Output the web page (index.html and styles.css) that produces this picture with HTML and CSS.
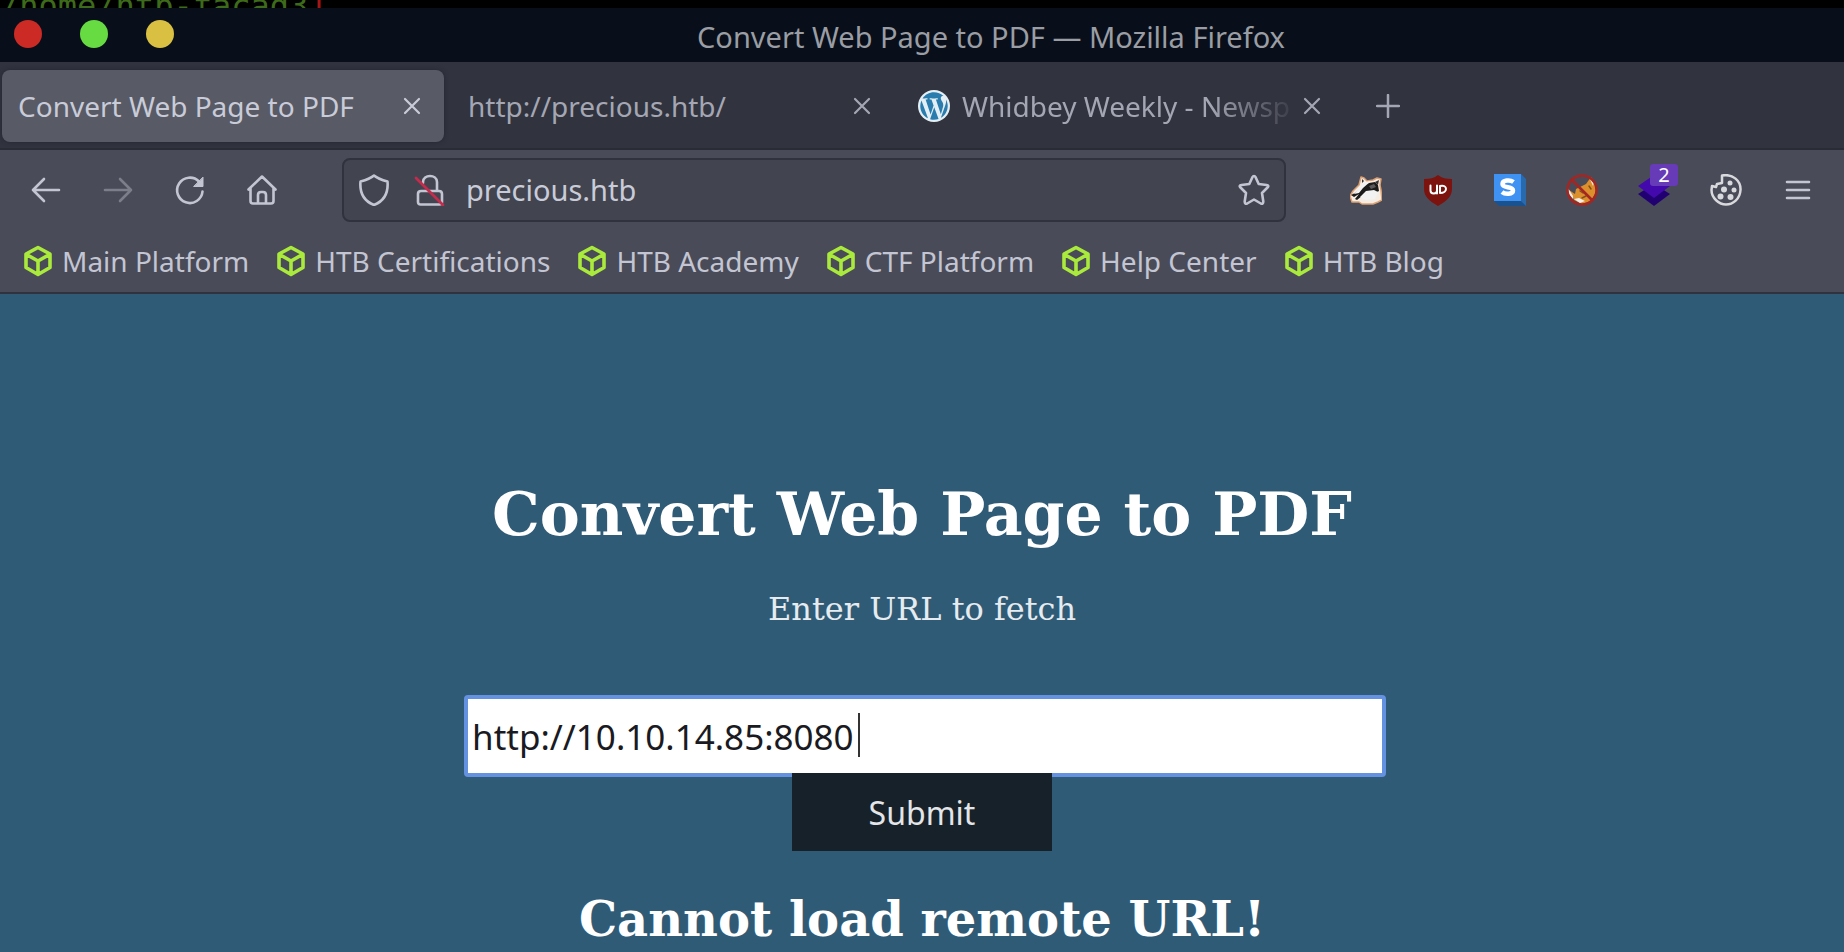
FILE: index.html
```html
<!DOCTYPE html>
<html lang="en">
<head>
<meta charset="utf-8">
<title>Convert Web Page to PDF</title>
<link rel="stylesheet" href="styles.css">
</head>
<body>
<svg class="sprite" aria-hidden="true">
  <symbol id="close" viewBox="0 0 24 24"><path d="M5 5l14 14M19 5L5 19" fill="none" stroke="currentColor" stroke-width="2.200" stroke-linecap="round"/></symbol>
  <symbol id="cube" viewBox="0 0 28 32"><path d="M14 2.500L26 9v13.500L14 29.500 2 22.500V9zM2.500 9.500L14 16l11.500-6.500M14 16v13" fill="none" stroke="#a9ea3c" stroke-width="3.600" stroke-linejoin="round"/></symbol>
</svg>
<div class="terminal"><span class="path">/home/htb-facad3</span><span class="bracket">]</span></div>
<header class="titlebar">
  <div class="lights">
    <button class="light red" aria-label="Close window"></button>
    <button class="light green" aria-label="Maximize window"></button>
    <button class="light yellow" aria-label="Minimize window"></button>
  </div>
  <div class="window-title">Convert Web Page to PDF — Mozilla Firefox</div>
</header>
<nav class="tabs" aria-label="Tabs">
  <div class="tab active"><span class="tab-label">Convert Web Page to PDF</span><button class="tab-close" aria-label="Close tab"><svg viewBox="0 0 24 24"><use href="#close"/></svg></button></div>
  <div class="tab"><span class="tab-label">http://precious.htb/</span><button class="tab-close" aria-label="Close tab"><svg viewBox="0 0 24 24"><use href="#close"/></svg></button></div>
  <div class="tab">
    <svg class="favicon" viewBox="0 0 122.520 122.523" aria-hidden="true">
      <circle cx="61.260" cy="61.260" r="61.260" fill="#e4eff5"/>
      <g fill="#2a7cae"><path d="m8.708 61.260c0 20.802 12.089 38.779 29.619 47.298l-25.069-68.686c-2.916 6.536-4.550 13.769-4.550 21.388z"/><path d="m96.740 58.608c0-6.495-2.333-10.993-4.334-14.494-2.664-4.329-5.161-7.995-5.161-12.324 0-4.831 3.664-9.328 8.825-9.328.233 0 .454.029.681.042-9.350-8.566-21.807-13.796-35.489-13.796-18.360 0-34.513 9.420-43.910 23.688 1.233.037 2.395.063 3.382.063 5.497 0 14.006-.667 14.006-.667 2.833-.167 3.167 3.994.337 4.329 0 0-2.847.335-6.015.501l19.138 56.925 11.501-34.493-8.188-22.434c-2.830-.166-5.511-.501-5.511-.501-2.832-.166-2.500-4.496.332-4.329 0 0 8.679.667 13.843.667 5.496 0 14.006-.667 14.006-.667 2.835-.167 3.168 3.994.337 4.329 0 0-2.853.335-6.015.501l18.992 56.494 5.242-17.517c2.272-7.269 4.001-12.490 4.001-16.989z"/><path d="m62.184 65.857-15.768 45.819c4.708 1.384 9.687 2.141 14.846 2.141 6.120 0 11.989-1.058 17.452-2.979-.141-.225-.269-.464-.374-.724z"/><path d="m107.376 36.046c.226 1.674.354 3.471.354 5.404 0 5.333-.996 11.328-3.996 18.824l-16.053 46.413c15.624-9.111 26.133-26.038 26.133-45.426.001-9.137-2.333-17.729-6.438-25.215z"/></g>
    </svg>
    <span class="tab-label fade">Whidbey Weekly - Newsp</span><button class="tab-close" aria-label="Close tab"><svg viewBox="0 0 24 24"><use href="#close"/></svg></button>
  </div>
  <button class="new-tab" aria-label="New tab"><svg viewBox="0 0 24 24"><path d="M12 1v22M1 12h22" stroke="currentColor" stroke-width="2.500" stroke-linecap="round"/></svg></button>
</nav>
<div class="toolbar">
  <div class="tools">
    <button class="tool" aria-label="Back"><svg viewBox="0 0 32 32"><path d="M29 16H3M14 5L3 16l11 11" /></svg></button>
    <button class="tool dim" aria-label="Forward"><svg viewBox="0 0 32 32"><path d="M3 16h26M18 5l11 11-11 11"/></svg></button>
    <button class="tool" aria-label="Reload"><svg viewBox="0 0 32 32"><path d="M28.500 17.500A12.700 12.700 0 1 1 25 7.500"/><path d="M29 3.500v9h-9z" fill="currentColor" stroke-width="1"/></svg></button>
    <button class="tool" aria-label="Home"><svg viewBox="0 0 32 32"><path d="M2.500 15.500L16 2.500l13.500 13M4.500 14v13q0 2.500 2.500 2.500h18q2.500 0 2.500-2.500V14M12 29V21q0-3 3-3h2q3 0 3 3v8"/></svg></button>
  </div>
  <div class="urlbar">
    <svg class="glyph" viewBox="0 0 32 32" aria-hidden="true"><path d="M16 1.500C19 4 24 6 29.500 7.500 30.500 19 26 27 16 31 6 27 1.500 19 2.500 7.500 8 6 13 4 16 1.500z"/></svg>
    <svg class="glyph" viewBox="0 0 32 32" aria-hidden="true"><path d="M9 9V8c0-8 14-8 14 0v9M7 17h18q3 0 3 3v8q0 2.500-2.500 2.500h-19Q4 30.500 4 28v-8q0-3 3-3z"/><path d="M2 4l27 27" stroke="#c62b4c"/></svg>
    <input class="address" type="text" value="precious.htb" aria-label="Address">
    <button class="star" aria-label="Bookmark this page"><svg class="glyph" viewBox="0 0 32 32"><path d="M16 2q1 0 1.500 1l3.200 7 7.800 1q3 .5 1 2.500l-5.500 5.500 1.300 8.500q0 3-2.500 2L16 25.500 9.200 29.500q-2.500 1-2.500-2L8 19 2.500 13.500q-2-2 1-2.500l7.800-1 3.200-7q.5-1 1.500-1z"/></svg></button>
  </div>
  <div class="tools">
    <button class="tool" aria-label="Privacy Badger"><svg viewBox="0 0 32 32"><g stroke="none"><path d="M10 7l1-4 3 1 3 3 6-1 4-2 4 1-1 6 1 5 1 10-4 2-5 2H12l-3-2H2L0 22l3-5 6-6z" fill="#f5ede4" stroke="#dba173" stroke-width="1.500"/><path d="M1 21l4-2 7-7 7-3 6-1 3 3 1 6-4 2-6 0-7 3-5 4-2-1 4-5-5 3z" fill="#1b1b1b"/><path d="M4 20l10-12 7-1-8 7-4 5zM10 23l6-6 8-1 4 2-3 7-9 1z" fill="#f2f2f2"/><path d="M19 12l5-2 2 3-5 2z" fill="#5a5a5a"/><path d="M25 8l4-2-1 5zM12 5l2 2-2 2z" fill="#333"/></g></svg></button>
    <button class="tool" aria-label="uBlock Origin"><svg viewBox="0 0 32 32"><path d="M16 1c4 3 8 4 14 4v10c0 7-5 12-14 17C7 27 2 22 2 15V5c6 0 10-1 14-4z" fill="#7c130f" stroke="none"/><path d="M8.500 11.500v5c0 4 6.500 4 6.500 0v-5M15 11.500v8M18 19v-7c8-2 8 7 0 7" stroke="#fff" stroke-width="2"/></svg></button>
    <button class="tool" aria-label="Stylus"><svg viewBox="0 0 32 32"><g stroke="none"><path d="M0 0l27 0 5 5v27H5l-5-5z" fill="#19528f"/><path d="M27 0l5 5v27l-5-5z" fill="#286aac"/><path d="M0 0h27v27H0z" fill="#3f91f2"/></g><path d="M19.500 8C16 5.500 8.500 6 8.500 10c0 4.500 10.500 2 10.500 6.500 0 4-8 4-11 1.500" stroke="#fff" stroke-width="4.500" stroke-linecap="butt"/></svg></button>
    <button class="tool" aria-label="Proxy disabled"><svg viewBox="0 0 32 32"><path d="M3 16l6 4 1-5 10-5 5-7 4 5 1 10-5 9-9 3-8-4z" fill="#dc902d" stroke="none"/><path d="M2 14l5 8 0 3-5-6zM8 25l5-1 6 3-5 2zM23 3l5 5-1 4z" fill="#f1ede9" stroke="none"/><path d="M14 17l3 2M23 12l2 3M16 24l4-2" stroke="#83501a" stroke-width="1.500"/><circle cx="16" cy="16" r="14.500" stroke="#a32622" stroke-width="2.500"/><path d="M6 6l20 20" stroke="#a32622"/></svg></button>
    <button class="tool" aria-label="Wappalyzer, 2 found"><svg viewBox="0 0 32 32"><g stroke="none"><path d="M0 20l16-10 16 10-16 12z" fill="#210072"/><path d="M0 12L16 1l16 11-16 12z" fill="#4309ad"/></g></svg><span class="badge">2</span></button>
    <button class="tool" aria-label="Cookie editor"><svg viewBox="0 0 32 32"><path d="M12 1.500C23-.500 31 7 30.500 16S23 30.500 16 30.500 1.500 24 1.500 16l.5-4 4 1 1-3 5-1z" stroke="#d8d9dd" stroke-width="2.500"/><g fill="#d8d9dd" stroke="none"><circle cx="20" cy="9" r="2.500"/><circle cx="14" cy="15.500" r="3"/><circle cx="24" cy="16" r="2.500"/><circle cx="10.500" cy="22.500" r="3"/><circle cx="20.500" cy="23" r="3"/></g></svg></button>
    <button class="tool" aria-label="Menu"><svg viewBox="0 0 32 32"><path d="M5 8h22M5 16h22M5 24h22"/></svg></button>
  </div>
</div>
<nav class="bookmarks" aria-label="Bookmarks">
  <a href="#"><svg viewBox="0 0 28 32"><use href="#cube"/></svg>Main Platform</a>
  <a href="#"><svg viewBox="0 0 28 32"><use href="#cube"/></svg>HTB Certifications</a>
  <a href="#"><svg viewBox="0 0 28 32"><use href="#cube"/></svg>HTB Academy</a>
  <a href="#"><svg viewBox="0 0 28 32"><use href="#cube"/></svg>CTF Platform</a>
  <a href="#"><svg viewBox="0 0 28 32"><use href="#cube"/></svg>Help Center</a>
  <a href="#"><svg viewBox="0 0 28 32"><use href="#cube"/></svg>HTB Blog</a>
</nav>
<main class="page">
  <h1>Convert Web Page to PDF</h1>
  <form class="form">
    <label for="url">Enter URL to fetch</label>
    <div class="field"><input id="url" type="text" value="http://10.10.14.85:8080"><span class="caret"></span></div>
    <button class="submit" type="button">Submit</button>
  </form>
  <h2>Cannot load remote URL!</h2>
</main>
</body>
</html>
```
FILE: styles.css
```css
* { box-sizing: border-box; }
html, body { height: 100%; }
body {
  margin: 0;
  display: flex;
  flex-direction: column;
  overflow: hidden;
  background: #305b76;
  color: #c3c6d2;
  font: 28px/40px "Noto Sans", sans-serif;
}
button { padding: 0; border: 0; background: none; color: inherit; font: inherit; }
input { font: inherit; }
svg { display: block; flex: none; }
.sprite { position: absolute; width: 0; height: 0; }

.terminal {
  flex: none;
  display: flex;
  align-items: flex-start;
  height: 8px;
  overflow: hidden;
  background: #000;
  font: 32px/12px "DejaVu Sans Mono", monospace;
}
.path { color: #3d6a1b; }
.bracket { color: #a51616; }

.titlebar {
  flex: none;
  display: grid;
  grid-template-columns: 1fr auto 1fr;
  height: 54px;
  padding: 0 0 0 14px;
  background: #080f1a;
  color: #9a9da3;
  font-size: 29px;
}
.lights { display: flex; gap: 38px; padding-top: 12px; }
.light { width: 28px; height: 28px; border-radius: 50%; }
.red { background: #cb2b24; }
.green { background: #66dc42; }
.yellow { background: #d9c043; }
.window-title { padding: 9px 0 0 124px; }

.tabs {
  flex: none;
  display: flex;
  align-items: center;
  gap: 8px;
  height: 88px;
  padding: 2px 0 0 2px;
  background: #31333f;
  border-bottom: 2px solid #292b35;
  color: #a4a7b3;
}
.tab {
  display: flex;
  align-items: center;
  width: 442px;
  height: 72px;
  padding: 0 20px 0 16px;
  border-radius: 8px;
}
.tab.active { background: #585a66; color: #c9ccd8; box-shadow: 0 0 4px #24262e; }
.favicon { width: 32px; height: 32px; margin-right: 12px; }
.tab-label { flex: 1; min-width: 0; overflow: hidden; white-space: nowrap; }
.fade { -webkit-mask-image: linear-gradient(to left, transparent, #000 90px); mask-image: linear-gradient(to left, transparent, #000 90px); }
.tab-close svg { width: 24px; height: 24px; }
.new-tab { margin-left: 24px; }
.new-tab svg { width: 24px; height: 24px; }

.toolbar {
  flex: none;
  display: flex;
  align-items: center;
  gap: 44px;
  height: 80px;
  padding: 0 10px;
  background: #4a4b58;
}
.tools { display: flex; }
.tool { position: relative; display: flex; justify-content: center; width: 72px; }
.tool svg { width: 32px; height: 32px; }
.tool svg, .glyph {
  fill: none;
  stroke: currentColor;
  stroke-width: 2.600;
  stroke-linecap: round;
  stroke-linejoin: round;
}
.glyph { width: 32px; height: 32px; }
.dim { color: #7c7e89; }
.badge {
  position: absolute;
  top: -10px;
  left: 32px;
  width: 28px;
  height: 22px;
  border-radius: 3px;
  background: #673ab8;
  color: #fff;
  font-size: 20px;
  line-height: 22px;
}
.urlbar {
  flex: 1;
  display: flex;
  align-items: center;
  gap: 24px;
  height: 64px;
  padding: 0 14px;
  border: 2px solid #30323d;
  border-radius: 8px;
  background: #424450;
}
.address { flex: 1; min-width: 0; margin-left: -4px; padding: 0; border: 0; outline: 0; background: none; color: #c9ccd8; font-size: 29px; }

.bookmarks {
  flex: none;
  display: flex;
  gap: 28px;
  height: 64px;
  padding: 11px 24px;
  background: #4a4b58;
  border-bottom: 2px solid #30323d;
}
.bookmarks a { display: flex; align-items: center; gap: 10px; color: inherit; text-decoration: none; white-space: nowrap; }
.bookmarks svg { width: 28px; height: 32px; }

.page {
  flex: 1;
  padding-top: 185px;
  color: #fff;
  font-family: "DejaVu Serif", serif;
  text-align: center;
}
h1 { margin: 0; font-size: 60px; line-height: 70px; }
h2 { margin: 40px 0 0; font-size: 48px; line-height: 56px; }
.form { display: flex; flex-direction: column; align-items: center; }
.form label { margin-top: 40px; color: #e6ebef; font-size: 32px; line-height: 40px; }
.field { position: relative; width: 50%; margin: 66px 0 0 6px; }
.field input {
  display: block;
  width: 100%;
  height: 82px;
  padding: 0 4px;
  border: 4px solid #6492e0;
  border-radius: 4px;
  outline: 0;
  background: #fff;
  color: #1a1a22;
  font-family: "Noto Sans", sans-serif;
  font-size: 35px;
}
.caret { position: absolute; left: 394px; top: 18px; width: 2px; height: 44px; background: #333; }
.submit {
  position: relative;
  width: 260px;
  height: 78px;
  margin-top: -4px;
  padding-top: 2px;
  background: #172129;
  color: #e3e5e8;
  font-family: "Noto Sans", sans-serif;
  font-size: 32px;
}
```
